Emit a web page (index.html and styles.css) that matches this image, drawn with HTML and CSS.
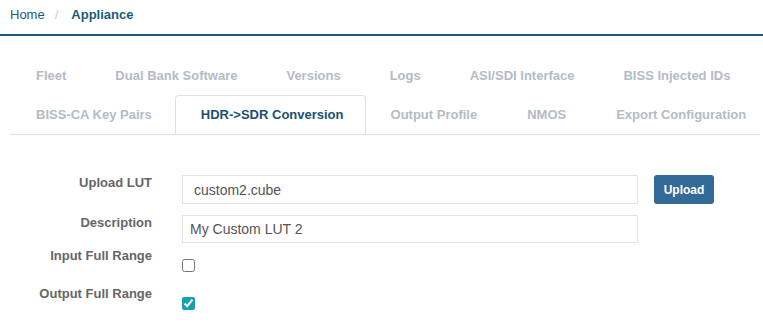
FILE: index.html
```html
<!DOCTYPE html>
<html lang="en">
<head>
    <meta charset="UTF-8">
    <title>Appliance</title>
    <link rel="stylesheet" href="styles.css">
</head>
<body>
<!-- breadcrumb -->
<div class="crumbs">
    <a class="crumb" href="#">Home</a>
    <span class="sep">/</span>
    <span class="crumb current">Appliance</span>
</div>

<!-- tabs -->
<div class="tabs">
    <div class="tab-row top-row">
        <span class="tab">Fleet</span>
        <span class="tab">Dual Bank Software</span>
        <span class="tab">Versions</span>
        <span class="tab">Logs</span>
        <span class="tab">ASI/SDI Interface</span>
        <span class="tab">BISS Injected IDs</span>
    </div>
    <div class="tab-row">
        <span class="tab">BISS-CA Key Pairs</span>
        <span class="tab active">HDR-&gt;SDR Conversion</span>
        <span class="tab">Output Profile</span>
        <span class="tab">NMOS</span>
        <span class="tab">Export Configuration</span>
    </div>
</div>

<!-- form -->
<form class="lut-form">
    <div class="row row-text">
        <label class="lbl">Upload LUT</label>
        <input class="field file-field" type="text" value="custom2.cube">
        <button class="btn" type="button">Upload</button>
    </div>
    <div class="row row-text row-desc">
        <label class="lbl">Description</label>
        <input class="field" type="text" value="My Custom LUT 2">
    </div>
    <div class="row row-check">
        <label class="lbl">Input Full Range</label>
        <input class="check" type="checkbox">
    </div>
    <div class="row row-check">
        <label class="lbl">Output Full Range</label>
        <input class="check" type="checkbox" checked>
    </div>
</form>
</body>
</html>
```

FILE: styles.css
```css
/* page */
body {
    margin: 0;
    font-family: "Liberation Sans", Arial, sans-serif;
    font-size: 13px;
    background: #fff;
    overflow: hidden;
}

/* breadcrumb */
.crumbs {
    display: flex;
    align-items: center;
    height: 36px;
    padding: 0 10px 6px;
    border-bottom: 2px solid #1c5b7b;
    box-sizing: border-box;
}

.crumb {
    color: #1c5b7b;
    text-decoration: none;
}

.crumb.current {
    font-weight: bold;
}

.sep {
    color: #ccc;
    padding: 0 10px;
    margin-right: 3px;
}

/* tabs */
.tabs {
    margin: 20px 3px 0 10px;
    border-bottom: 1px solid #e0e0e0;
    overflow: hidden;
    white-space: nowrap;
}

.tab-row {
    display: flex;
    padding-left: 1px;
}

.tab {
    display: block;
    height: 39px;
    line-height: 39px;
    padding: 0 25px;
    font-weight: bold;
    color: #b3bcc6;
    box-sizing: border-box;
}

.top-row .tab {
    padding: 0 24.5px;
}

.top-row .tab:first-child {
    padding-left: 25px;
}

.tab.active {
    color: #1b4f72;
    border: 1px solid #e0e0e0;
    border-bottom-color: #fff;
    border-radius: 4px 4px 0 0;
    margin-bottom: -1px;
    height: 40px;
    line-height: 37px;
    margin-left: -2px;
    padding: 0 21px 0 25px;
}

/* form */
.lut-form {
    margin-top: 40px;
}

.row {
    display: flex;
    align-items: flex-start;
}

.row-text {
    height: 29px;
    margin-bottom: 11px;
}

.row-desc {
    height: 28px;
    margin-bottom: 5px;
}

.row-check {
    height: 38px;
}

.lbl {
    width: 152px;
    margin-right: 30px;
    text-align: right;
    font-weight: bold;
    color: #666;
    line-height: 16px;
}

.field {
    width: 456px;
    height: 29px;
    box-sizing: border-box;
    margin: 0;
    padding: 0 7px;
    border: 1px solid #e2e2e2;
    font-family: "Liberation Sans", Arial, sans-serif;
    font-size: 14px;
    color: #555;
    outline: none;
}

.row-desc .field {
    height: 28px;
}

.file-field {
    padding-left: 11px;
}

.btn {
    margin-left: 16px;
    width: 60px;
    height: 29px;
    border: none;
    border-radius: 3px;
    background: #346a98;
    color: #fff;
    font-family: "Liberation Sans", Arial, sans-serif;
    font-size: 12px;
    font-weight: bold;
}

.check {
    margin: 11px 0 0 0;
    width: 13px;
    height: 13px;
    accent-color: #17a0b0;
}
```
